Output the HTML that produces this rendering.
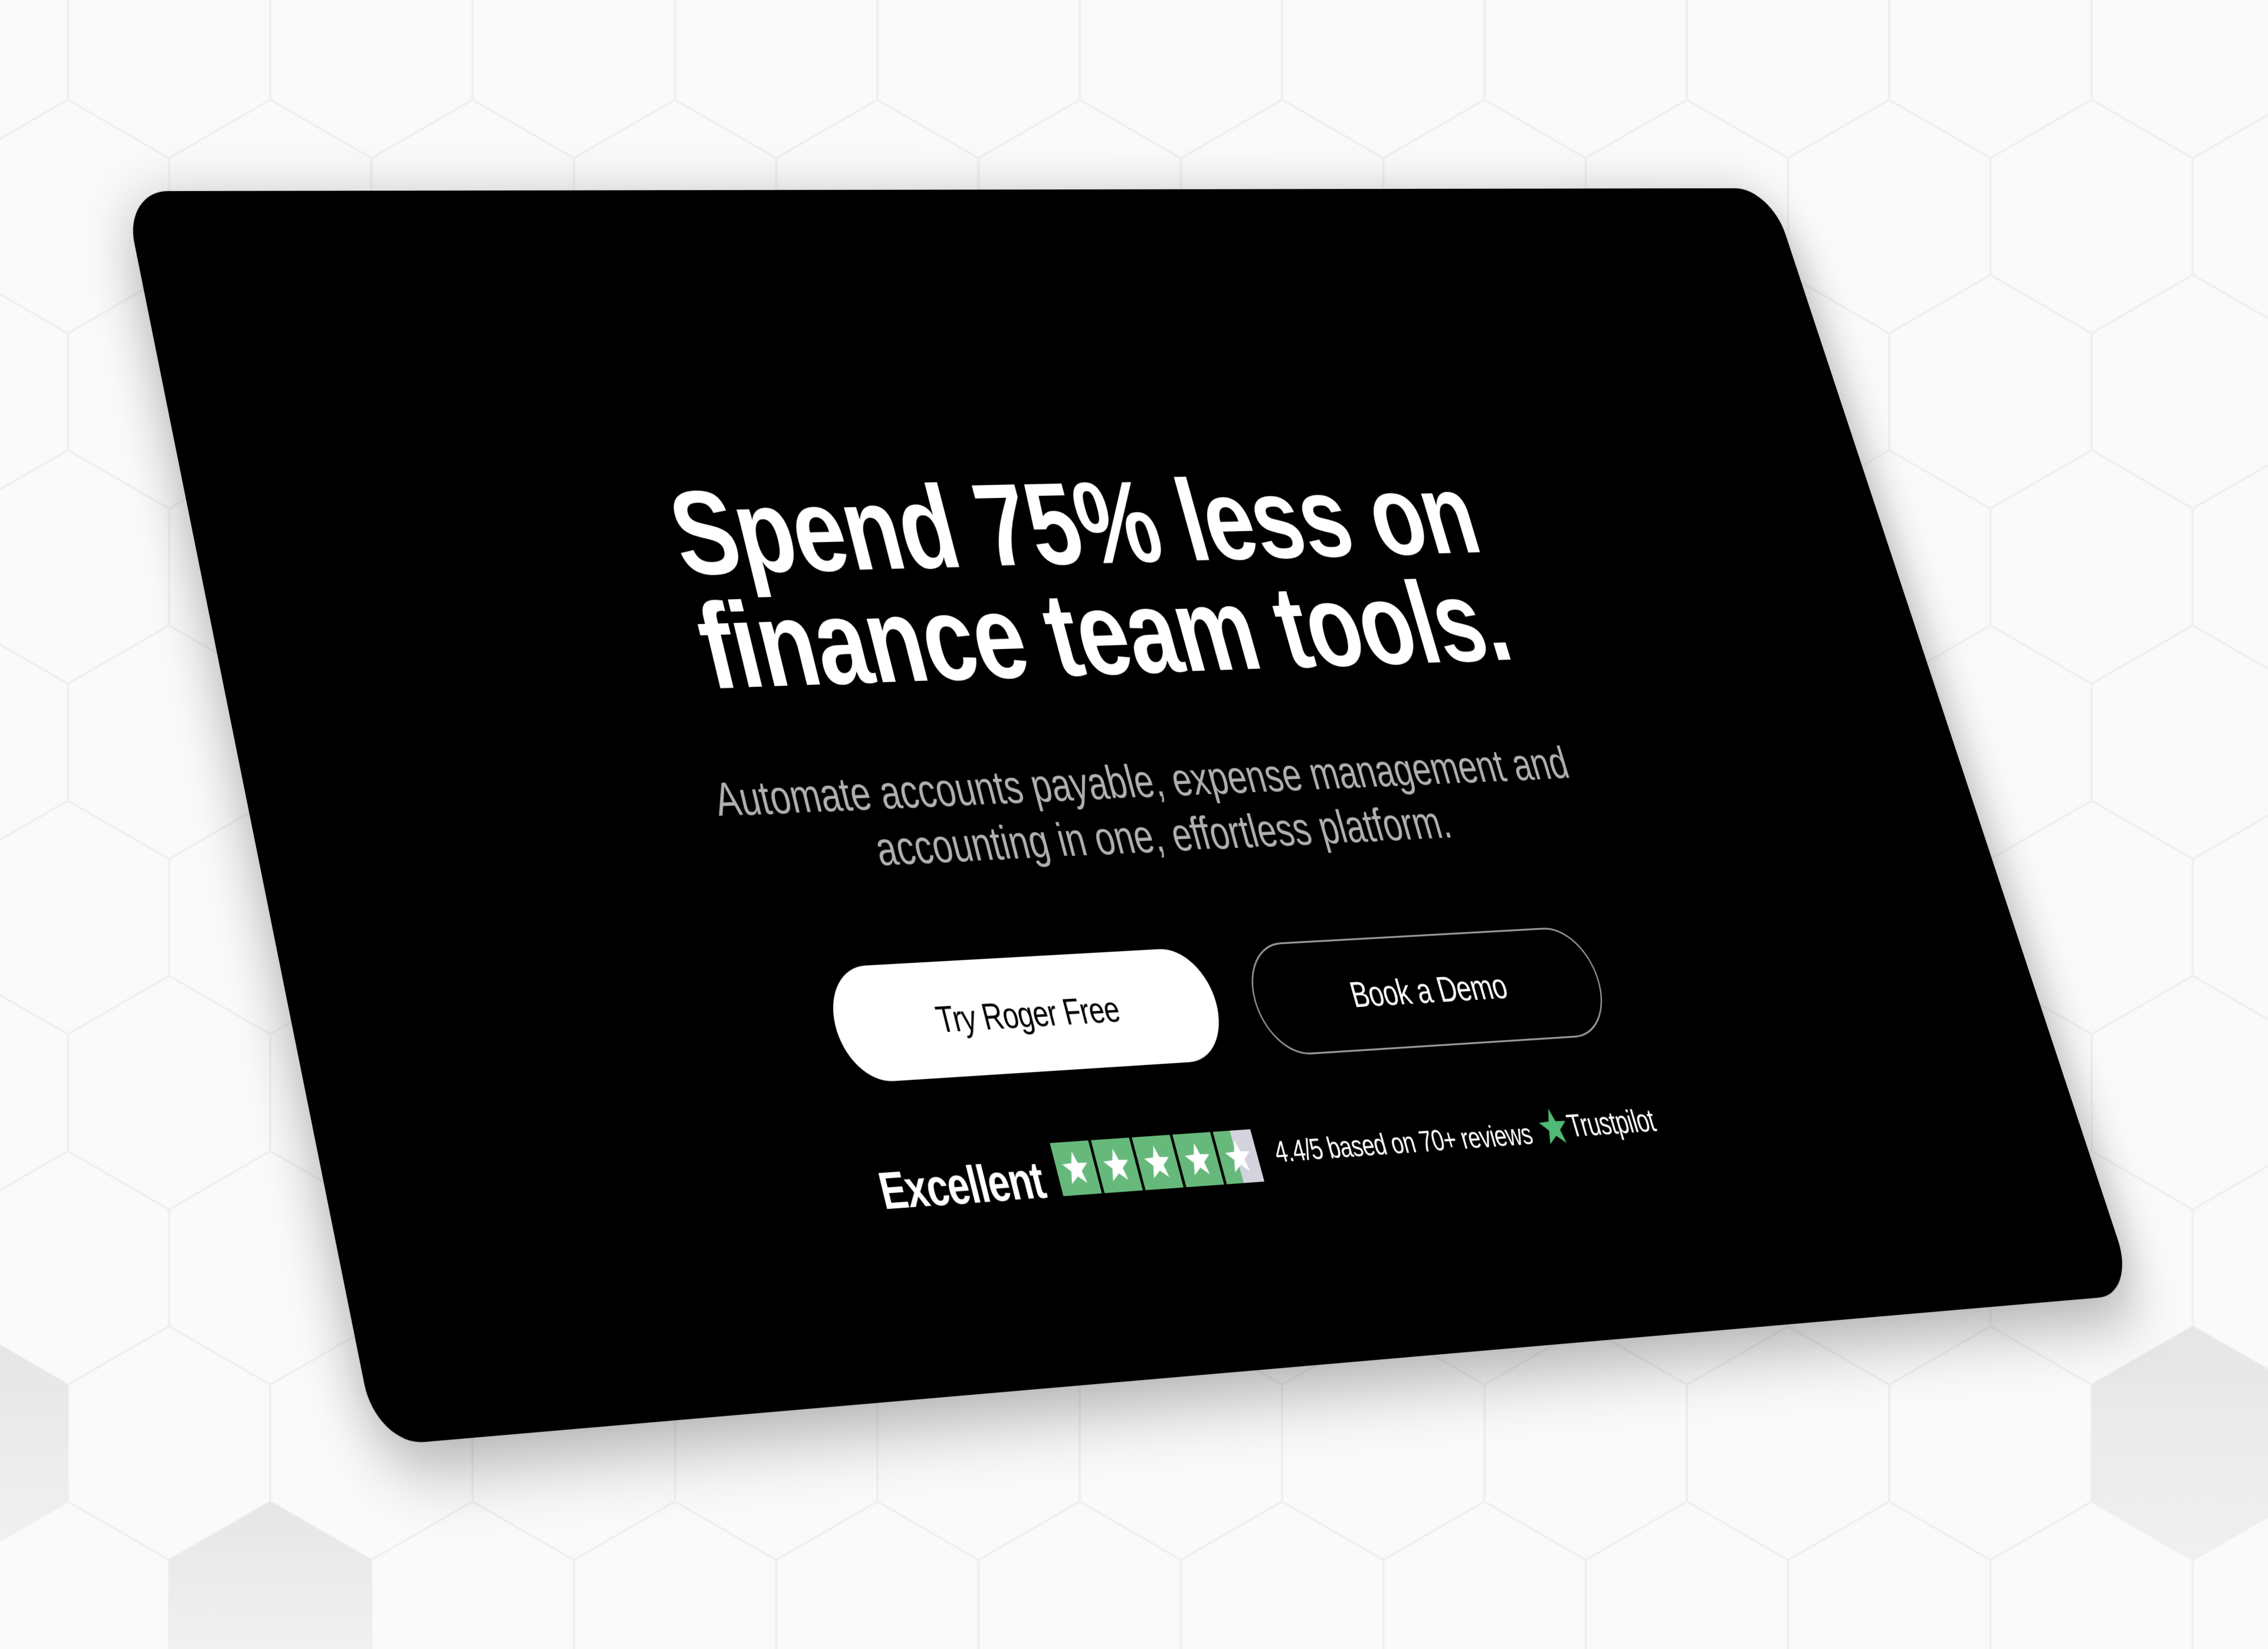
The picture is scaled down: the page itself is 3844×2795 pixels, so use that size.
<!DOCTYPE html>
<html><head><meta charset="utf-8"><style>
html,body{margin:0;padding:0;overflow:hidden}
body{width:3844px;height:2795px;overflow:hidden;background:#fafafa;position:relative;font-family:"Liberation Sans",sans-serif}
#wrap{position:absolute;left:0;top:0;width:3844px;height:2795px;overflow:hidden}
#bg{position:absolute;left:0;top:0;display:block}
#card{position:absolute;left:0;top:0;width:3800px;height:2000px;background:#000;border-radius:90px;
transform-origin:0 0;transform:matrix3d(0.830729,0.0089368,0,0.000032141,0.18578,0.95385,0,-0.00004474,0,0,1,0,210,324,0,1);
box-shadow:0 30px 110px rgba(0,0,0,0.33)}
.h{position:absolute;left:0;top:508px;width:3800px;text-align:center;color:#fff;font-weight:bold;font-size:204px;line-height:192px;letter-spacing:-2px}
.s{position:absolute;left:0;top:1004px;width:3800px;text-align:center;color:#b0b0b0;font-size:77px;line-height:92px;letter-spacing:0}
.b{position:absolute;top:1328px;height:185px;border-radius:95px;box-sizing:border-box;display:flex;align-items:center;justify-content:center;font-size:60px;letter-spacing:-1px}
.b1{left:1085px;width:820px;background:#fff;color:#000}
.b2{left:1990px;width:785px;border:3px solid #9a9a9a;color:#fff}
.row{position:absolute;left:50px;top:1598px;width:3800px;height:140px;display:flex;align-items:center;justify-content:center;color:#fff}
.ex{font-size:82px;font-weight:bold;letter-spacing:-2px;margin-right:34px;margin-top:30px}
.stars{display:flex;gap:6px;margin-right:40px}
.sq{width:82px;height:84px;background:#67b97b;display:flex;align-items:center;justify-content:center}
.sq.last{background:linear-gradient(90deg,#67b97b 0 45%,#d3d3de 45%)}
.rv{font-size:49px;letter-spacing:-1px;margin-right:22px;margin-top:-6px}
.tp{display:flex;align-items:center;font-size:51px;letter-spacing:-1px;margin-top:-24px}
</style></head><body>
<div id="wrap">
<svg id="bg" width="3844" height="2795" viewBox="0 0 3844 2795">
<defs><pattern id="hx" patternUnits="userSpaceOnUse" x="286.5" y="169" width="343" height="594">
<path d="M171.5,0 L343,99 L343,297 L171.5,396 L0,297 L0,99 Z M171.5,396 L171.5,594" fill="none" stroke="#f0f0f0" stroke-width="4"/>
</pattern>
<linearGradient id="g" x1="0" y1="0" x2="0" y2="1"><stop offset="0" stop-color="#e6e6e6"/><stop offset="1" stop-color="#f0f0f0"/></linearGradient></defs>
<rect width="3844" height="2795" fill="url(#hx)"/>
<polygon points="458,2545 629.5,2644 629.5,2795 286.5,2795 286.5,2644" fill="url(#g)"/>
<polygon points="0,2280 115.5,2347 115.5,2545 0,2612" fill="url(#g)"/>
<polygon points="3716.5,2248 3844,2321 3844,2571 3716.5,2644 3545,2545 3545,2347" fill="url(#g)"/>
</svg>
<div id="card">
<div class="h">Spend 75% less on<br>finance team tools.</div>
<div class="s">Automate accounts payable, expense management and<br>accounting in one, effortless platform.</div>
<div class="b b1">Try Roger Free</div>
<div class="b b2">Book a Demo</div>
<div class="row">
<div class="ex">Excellent</div>
<div class="stars">
<div class="sq"><svg width="58" height="58" viewBox="0 0 24 24"><polygon points="12,1 14.8,8.6 23,9 16.6,14 18.8,22 12,17.4 5.2,22 7.4,14 1,9 9.2,8.6" fill="#fff"/></svg></div>
<div class="sq"><svg width="58" height="58" viewBox="0 0 24 24"><polygon points="12,1 14.8,8.6 23,9 16.6,14 18.8,22 12,17.4 5.2,22 7.4,14 1,9 9.2,8.6" fill="#fff"/></svg></div>
<div class="sq"><svg width="58" height="58" viewBox="0 0 24 24"><polygon points="12,1 14.8,8.6 23,9 16.6,14 18.8,22 12,17.4 5.2,22 7.4,14 1,9 9.2,8.6" fill="#fff"/></svg></div>
<div class="sq"><svg width="58" height="58" viewBox="0 0 24 24"><polygon points="12,1 14.8,8.6 23,9 16.6,14 18.8,22 12,17.4 5.2,22 7.4,14 1,9 9.2,8.6" fill="#fff"/></svg></div>
<div class="sq last"><svg width="58" height="58" viewBox="0 0 24 24"><polygon points="12,1 14.8,8.6 23,9 16.6,14 18.8,22 12,17.4 5.2,22 7.4,14 1,9 9.2,8.6" fill="#fff"/></svg></div>
</div>
<div class="rv">4.4/5 based on 70+ reviews</div>
<div class="tp"><svg width="66" height="66" viewBox="0 0 24 24"><polygon points="12,1 14.8,8.6 23,9 16.6,14 18.8,22 12,17.4 5.2,22 7.4,14 1,9 9.2,8.6" fill="#4fba75"/></svg><span>Trustpilot</span></div>
</div>
</div>
</div>
</body></html>
